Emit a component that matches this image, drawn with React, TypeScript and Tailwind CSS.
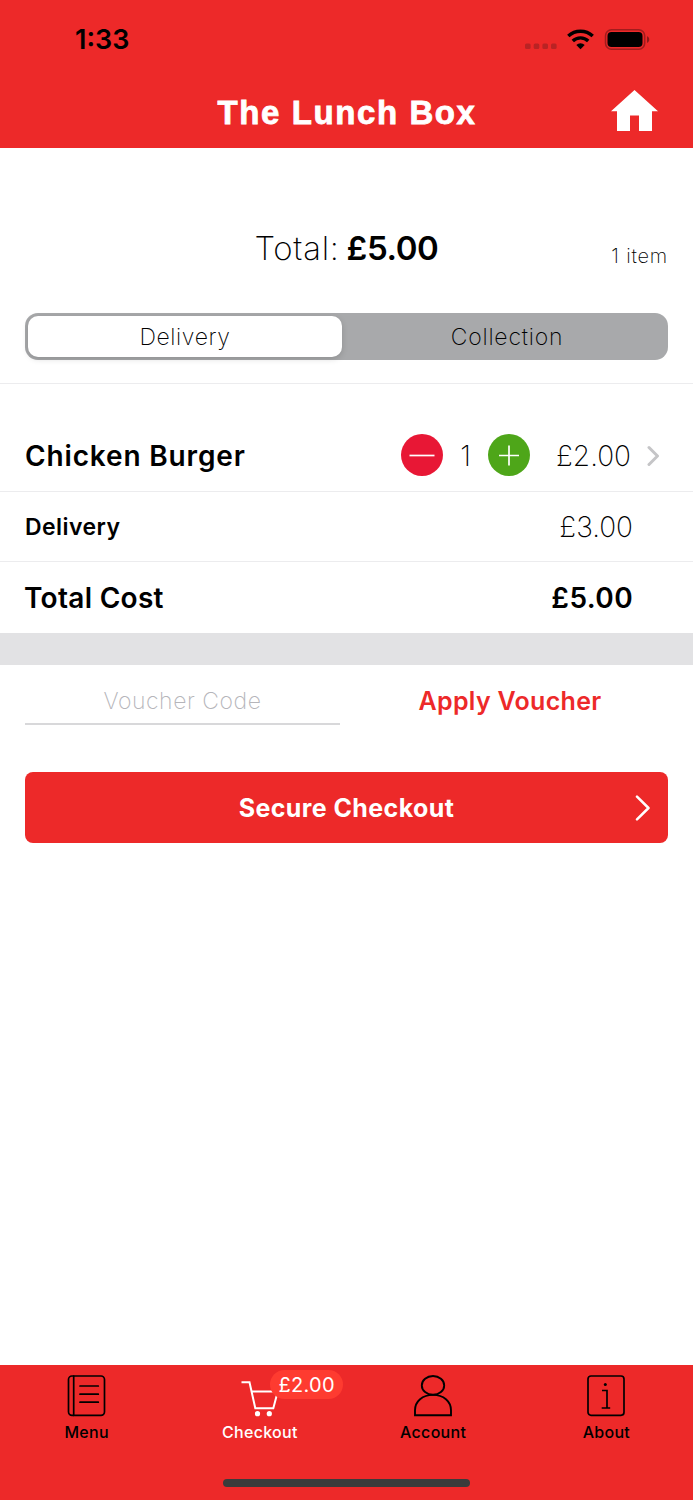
import type { ReactNode } from "react";

function StatusBar() {
  return (
    <div className="flex h-[80px] items-center justify-between pl-[75px] pr-[43px]">
      <span className="text-[27px] font-semibold leading-8 text-black">1:33</span>
      <div className="flex items-center">
        <svg width="32" height="24" viewBox="0 0 32 24" fill="#b92324">
          <rect x="0" y="15.5" width="5.6" height="5.6" rx="1.5" />
          <rect x="8.7" y="15.5" width="5.6" height="5.6" rx="1.5" />
          <rect x="17.4" y="15.5" width="5.6" height="5.6" rx="1.5" />
          <rect x="26" y="15.5" width="5.6" height="5.6" rx="1.5" />
        </svg>
        <svg className="ml-2.5" width="27" height="22" viewBox="0 0 27 22" fill="none" stroke="#000" strokeWidth="3.4">
          <path d="M1.3 7.1a17.6 17.6 0 0 1 24.4 0" />
          <path d="M5.8 12a11.1 11.1 0 0 1 15.4 0" />
          <path d="M9.3 16a6 6 0 0 1 8.4 0l-4.200 4.200z" fill="#000" stroke="none" />
        </svg>
        <svg className="ml-2.5" width="46" height="22" viewBox="0 0 46 22">
          <rect x="1.5" y="0.800" width="39.200" height="19.400" rx="6" fill="none" stroke="#a11c1d" strokeWidth="1.5" />
          <rect x="3.500" y="3" width="35" height="15" rx="4" fill="#000" />
          <path d="M43 7.3c3 1 3 5.6 0 6.600z" fill="#8e191a" />
        </svg>
      </div>
    </div>
  );
}

function Header() {
  return (
    <header className="h-[148px] shrink-0 bg-[#ed2929]">
      <StatusBar />
      <div className="flex h-[66px] items-center">
        <div className="w-[100px]" />
        <h1 className="flex-1 whitespace-nowrap pl-px text-center font-['Liberation_Sans',sans-serif] text-[33px] font-bold leading-[66px] tracking-[1.6px] text-white [-webkit-text-stroke:0.8px_white]">
          The Lunch Box
        </h1>
        <div className="flex w-[100px] pl-[18px] pb-1">
          <svg width="48" height="42" viewBox="0 0 48 42" fill="#fff">
            <path d="M23.500 0 0 21.300h6V41h13V25.500h9V41h13V21.300h6z" />
          </svg>
        </div>
      </div>
    </header>
  );
}

function Summary() {
  return (
    <section className="h-[236px] shrink-0 border-b border-[#ececee] px-[25px]">
      <div className="grid h-[165px] grid-cols-[1fr_auto_1fr] pt-20">
        <div />
        <p className="flex items-baseline whitespace-nowrap text-[33px] leading-10 text-black">
          <span className="font-extralight tracking-[0.7px]">Total:</span>
          <span className="ml-[7px] font-semibold tracking-[-0.4px]">£5.00</span>
        </p>
        <p className="pt-4 text-right text-xl font-extralight leading-6 tracking-[0.8px] text-black">1 item</p>
      </div>
      <div className="flex h-[47px] rounded-[13px] bg-[#a8a9ab] p-[3px] text-[23px] font-extralight leading-[42px] tracking-[0.600px] text-black">
        <button className="w-[314px] rounded-[10px] bg-white shadow-[0_2px_6px_rgba(0,0,0,0.15)]">Delivery</button>
        <button className="flex-1 pl-[7px] tracking-[0.8px]">Collection</button>
      </div>
    </section>
  );
}

function RoundButton({ color, children }: { color: string; children: ReactNode }) {
  return (
    <button className={`mb-0.5 flex size-[42px] items-center justify-center rounded-full ${color}`}>
      <svg width="42" height="42" viewBox="0 0 42 42" stroke="#fff" strokeWidth="1.7">
        {children}
      </svg>
    </button>
  );
}

function Basket() {
  return (
    <section className="shrink-0 text-black">
      <div className="flex h-[108px] items-center border-b border-[#ececee] pl-[25px] pr-[33px] pt-[36px]">
        <h2 className="w-[376px] whitespace-nowrap text-[28px] font-semibold leading-9 tracking-[0.85px]">Chicken Burger</h2>
        <RoundButton color="bg-[#e81735]">
          <path d="M8.500 21.500h25" />
        </RoundButton>
        <span className="w-[45px] text-center text-[28px] font-extralight leading-9">1</span>
        <RoundButton color="bg-[#4ea619]">
          <path d="M11 21.500h20M21 11.500v20" />
        </RoundButton>
        <span className="flex-1 pr-4 text-right text-[28px] font-extralight leading-9">£2.00</span>
        <svg width="13" height="22" viewBox="0 0 13 22" fill="none" stroke="#c5c5c7" strokeWidth="3" strokeLinecap="round" strokeLinejoin="round">
          <path d="M2 2.500 10.500 11 2 19.500" />
        </svg>
      </div>
      <div className="flex h-[70px] items-center justify-between border-b border-[#ececee] pl-[25px] pr-[60px]">
        <span className="text-[23px] font-semibold leading-8 tracking-[0.45px]">Delivery</span>
        <span className="text-[28px] font-extralight leading-9">£3.00</span>
      </div>
      <div className="flex h-[71px] items-center justify-between pl-[24px] pr-[60px]">
        <span className="text-[28px] font-semibold leading-9 tracking-[0.3px]">Total Cost</span>
        <span className="text-[28px] font-semibold leading-9 tracking-[0.4px]">£5.00</span>
      </div>
      <div className="h-8 bg-[#e2e2e4]" />
    </section>
  );
}

function Voucher() {
  return (
    <section className="shrink-0 px-[25px]">
      <div className="flex">
        <div className="h-[60px] w-[315px] border-b-2 border-[#d8d8da] text-center text-[23px] font-extralight leading-[72px] tracking-[0.55px] text-[#b5b5ba]">
          Voucher Code
        </div>
        <button className="h-[60px] flex-1 pl-3 text-[25px] font-semibold leading-[72px] tracking-[0.3px] text-[#ed2929]">
          Apply Voucher
        </button>
      </div>
      <button className="mt-[47px] flex h-[71px] w-full items-center rounded-[8px] bg-[#ed2929] text-[25px] font-bold tracking-[0.4px] text-white">
        <span className="flex-1 pl-[33px] pt-0.5">Secure Checkout</span>
        <svg className="mr-[17px]" width="16" height="26" viewBox="0 0 16 26" fill="none" stroke="#fff" strokeWidth="2.500" strokeLinecap="round" strokeLinejoin="round">
          <path d="M2 1.700 13.500 13 2 24.300" />
        </svg>
      </button>
    </section>
  );
}

function MenuIcon() {
  return (
    <svg width="40" height="44" viewBox="0 0 40 44" fill="none" stroke="#000" strokeWidth="1.700" strokeLinecap="round">
      <rect x="1.500" y="2" width="36" height="39.300" rx="3.500" />
      <path d="M6.700 2v39.300M13 12h18.300M13 20.200h18.300M13 28.200h18.300" />
    </svg>
  );
}

function CartIcon() {
  return (
    <svg width="40" height="44" viewBox="0 0 40 44" fill="none" stroke="#fff" strokeWidth="2">
      <path d="M1.500 8.200h8l5.800 26h18l4-15M11.500 17.500h26" />
      <circle cx="17.500" cy="39.700" r="2.600" fill="#fff" stroke="none" />
      <circle cx="29.300" cy="39.700" r="2.600" fill="#fff" stroke="none" />
    </svg>
  );
}

function AccountIcon() {
  return (
    <svg width="40" height="44" viewBox="0 0 40 44" fill="none" stroke="#000" strokeWidth="1.900">
      <ellipse cx="20" cy="11.400" rx="11.200" ry="9.400" />
      <path d="M2 41.300v-5c0-9 7.500-15.400 18-15.400s18 6.400 18 15.400v5z" />
    </svg>
  );
}

function AboutIcon() {
  return (
    <svg width="40" height="44" viewBox="0 0 40 44" fill="none" stroke="#000" strokeWidth="1.700">
      <rect x="2" y="2" width="36" height="39.300" rx="3" />
      <path d="M16 16.500h5v17.300M15.700 34h8.500" />
      <circle cx="19.300" cy="10.500" r="1.500" fill="#000" stroke="none" />
    </svg>
  );
}

function Tab({ label, active, badge, children }: { label: string; active?: boolean; badge?: string; children: ReactNode }) {
  return (
    <a className={`relative flex flex-1 flex-col items-center pt-[9px] ${active ? "text-white" : "text-black"}`}>
      {children}
      <span className="mt-0.5 text-base font-medium leading-6 tracking-[0.3px]">{label}</span>
      {badge && (
        <span className="absolute left-[97px] top-[5px] flex h-[29px] w-[73px] items-center justify-center rounded-full bg-[#fe3b30] text-xl leading-none tracking-[0.3px]">
          {badge}
        </span>
      )}
    </a>
  );
}

export default function App() {
  return (
    <div className="flex h-[1500px] w-[693px] flex-col overflow-hidden bg-white font-['Inter',sans-serif]">
      <Header />
      <Summary />
      <Basket />
      <Voucher />
      <nav className="mt-auto h-[135px] shrink-0 bg-[#ed2929]">
        <div className="flex h-[114px]">
          <Tab label="Menu">
            <MenuIcon />
          </Tab>
          <Tab label="Checkout" badge="£2.00" active>
            <CartIcon />
          </Tab>
          <Tab label="Account">
            <AccountIcon />
          </Tab>
          <Tab label="About">
            <AboutIcon />
          </Tab>
        </div>
        <div className="mx-auto h-2 w-[247px] rounded-full bg-[#3b3b3b]" />
      </nav>
    </div>
  );
}
